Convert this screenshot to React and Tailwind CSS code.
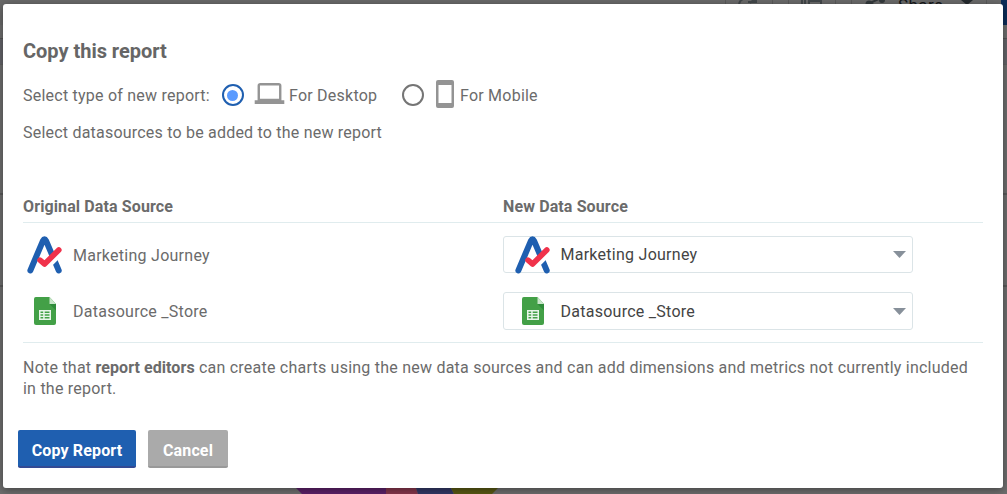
function JourneyLogo({ className }) {
  return (
    <svg className={className} viewBox="0 0 36 38" fill="none">
      <path d="M3.4 34.4 L15.9 4.8 Q17.5 1.8 19.1 4.8 L31.7 34.4" stroke="#1f5fb0" strokeWidth="6" strokeLinecap="round" strokeLinejoin="round" />
      <path d="M20.7 30.7 L33.5 17.7" stroke="#fff" strokeWidth="5" />
      <path d="M13 24.2 L17.6 28 L31.8 14" stroke="#f0324b" strokeWidth="5.6" strokeLinecap="round" strokeLinejoin="round" />
    </svg>
  );
}

function SheetIcon({ className }) {
  return (
    <svg className={className} viewBox="0 0 22 28">
      <path d="M1.8 0H15.5L22 7V26Q22 28 20 28H2Q0 28 0 26V2Q0 0 1.8 0Z" fill="#43a047" />
      <path d="M15.5 7H22V13.5Z" fill="#2e8b3a" />
      <path d="M15.5 0L22 7H15.5Z" fill="#c8e6c9" />
      <path d="M5 13H17V23H5ZM6.5 14.5V16H9.2V14.5ZM10.7 14.5V16H15.5V14.5ZM6.5 17.3V18.8H9.2V17.3ZM10.7 17.3V18.8H15.5V17.3ZM6.5 20.1V21.6H9.2V20.1ZM10.7 20.1V21.6H15.5V20.1Z" fill="#e8f5e9" fillRule="evenodd" />
    </svg>
  );
}

function Radio({ checked }) {
  return (
    <span className={checked
      ? "flex size-[22px] shrink-0 items-center justify-center rounded-full border-2 border-[#1f5fb0]"
      : "flex size-[22px] shrink-0 items-center justify-center rounded-full border-2 border-[#757575]"}>
      {checked && <span className="size-[11px] rounded-full bg-[#5b9bff]" />}
    </span>
  );
}

function Select({ icon, children, className }) {
  return (
    <div className={"flex w-[410px] items-center rounded-[3px] border border-[#dbe4e7] text-[#444] " + className}>
      <span className="flex w-[56.5px] shrink-0 items-center justify-center pl-px">{icon}</span>
      <span className="grow">{children}</span>
      <svg className="mr-[6px] h-[7px] w-[13px]" viewBox="0 0 13 7"><path d="M0 0H13L6.5 7Z" fill="#87909a" /></svg>
    </div>
  );
}

function Backdrop() {
  return (
    <div className="flex h-full flex-col bg-[#6e6e6e]">
      <div className="flex h-[25px] justify-end bg-[#6a6a6a]">
        <div className="flex w-[47px] justify-center border-l border-[#5a5a5a]">
          <svg className="h-4 w-6" viewBox="0 0 24 16"><path d="M2 4Q3 0 6 -1M11 2H19V-2L13 3" fill="none" stroke="#42474a" strokeWidth="2" /></svg>
        </div>
        <div className="w-4 border-l border-[#5a5a5a]" />
        <div className="flex w-[47px] justify-center border-l border-[#5a5a5a]">
          <svg className="h-4 w-6" viewBox="0 0 24 16" fill="none" stroke="#42474a" strokeWidth="2"><path d="M2 0V8M5 0V8M9 8V1H21V8" /></svg>
        </div>
        <div className="w-4 border-l border-[#5a5a5a]" />
        <div className="flex w-[135px] border-l border-[#5a5a5a]">
          <svg className="ml-3 h-5 w-[22px]" viewBox="0 0 22 20" stroke="#34393c" strokeWidth="2" fill="#34393c"><path d="M6 3L17 -2M6 3L17 9" /><circle cx="5" cy="4" r="2.5" /><circle cx="18" cy="0" r="2" /></svg>
          <span className="-mt-[7px] ml-[12px] w-[47px] text-[17px] leading-6 tracking-[0.4px] text-[#151719]">Share</span>
          <svg className="ml-4 h-[5px] w-3" viewBox="0 0 12 5"><path d="M0 0H12L6 5Z" fill="#252a2e" /></svg>
        </div>
        <div className="w-[15px] border-l border-[#5a5a5a]" />
        <div className="w-[6px] bg-[#0b2c59]" />
      </div>
      <div className="h-[14px] border-b border-[#555]" />
      <div className="h-[26px] border-b border-[#626262] bg-[#646469]" />
      <div className="h-[130px] border-b-2 border-[#5a5a5a]" />
      <div className="h-[92px] border-b-2 border-[#5a5a5a]" />
      <div className="flex grow items-end pl-[296px]">
        <svg className="h-[6px] w-[202px]" viewBox="0 0 202 6">
          <path d="M0 0H90V6H6Z" fill="#5c2069" />
          <path d="M90 0H120L122 6H90Z" fill="#86364c" />
          <path d="M120 0H155L158 6H122Z" fill="#323866" />
          <path d="M155 0H202L196 6H158Z" fill="#595914" />
        </svg>
      </div>
    </div>
  );
}

export default function App() {
  return (
    <div className="relative h-[494px] w-[1007px] overflow-hidden font-['Roboto',sans-serif] text-base tracking-[0.23px] text-[#6b6b6b]">
      <Backdrop />
      <div className="absolute left-[3px] top-1 flex h-[484px] w-[1000px] flex-col rounded-[3px] bg-white px-5 shadow-[0_2px_8px_rgba(0,0,0,0.4)]">
        <h1 className="mt-[34px] text-xl font-bold leading-[26px] tracking-[-0.02px] text-[#666]">Copy this report</h1>
        <div className="mt-[17px] flex h-[28px] items-center">
          <span className="w-[198.5px] pt-[2px]">Select type of new report:</span>
          <Radio checked />
          <svg className="-mt-[3px] ml-[10px] h-[21px] w-[31px]" viewBox="0 0 31 22"><path d="M6 0H25Q28 0 28 3V18H31V22H0V18H3V3Q3 0 6 0ZM5.5 2.5V16.5H25.5V2.5Z" fill="#949494" fillRule="evenodd" /></svg>
          <span className="ml-[4.5px] w-[113px] pt-px">For Desktop</span>
          <Radio />
          <svg className="-mt-[2px] ml-3 h-7 w-[18px]" viewBox="0 0 18 28"><path d="M2 0H16Q18 0 18 2V26Q18 28 16 28H2Q0 28 0 26V2Q0 0 2 0ZM2.5 5V23H15.5V5Z" fill="#949494" fillRule="evenodd" /></svg>
          <span className="ml-[6px] pt-px">For Mobile</span>
        </div>
        <p className="mt-[12px] leading-6 tracking-[0.21px]">Select datasources to be added to the new report</p>
        <div className="mt-[46px] grid h-[32px] grid-cols-2 border-b border-[#e0ecee] pt-1 font-bold tracking-[0.12px]">
          <span>Original Data Source</span>
          <span>New Data Source</span>
        </div>
        <div className="grid h-[120px] shrink-0 grid-cols-2 border-b border-[#e0ecee] tracking-[0.26px]">
          <div className="flex flex-col">
            <div className="mt-[13px] flex h-[38px] items-center"><span className="w-[50px] pl-1"><JourneyLogo className="h-[38px] w-9" /></span><span className="pt-px">Marketing Journey</span></div>
            <div className="mt-[18px] flex h-[38px] items-center"><span className="w-[50px] pl-[11px]"><SheetIcon className="h-7 w-[22px]" /></span><span className="pt-px">Datasource _Store</span></div>
          </div>
          <div className="flex flex-col">
            <Select className="mt-[13px] h-[37px]" icon={<JourneyLogo className="h-[38px] w-9 shrink-0" />}>Marketing Journey</Select>
            <Select className="mt-[19px] h-[38px]" icon={<SheetIcon className="h-7 w-[22px]" />}><span className="block pt-px">Datasource _Store</span></Select>
          </div>
        </div>
        <p className="mt-[14px] leading-[21px]">Note that <strong className="font-bold tracking-[0.07px]">report editors</strong> can create charts using the new data sources and can add dimensions and metrics not currently included in the report.</p>
        <div className="-ml-[5px] mt-[31px] flex gap-3">
          <button className="h-[38px] w-[118px] rounded-[2px] border-b-2 border-[#334a94] bg-[#1f5fb0] pt-[5px] font-bold tracking-[0.15px] text-white">Copy Report</button>
          <button className="h-[38px] w-20 rounded-[2px] border-b-2 border-[#999] bg-[#aaa] pt-[5px] font-bold tracking-[0.15px] text-white">Cancel</button>
        </div>
      </div>
    </div>
  );
}
